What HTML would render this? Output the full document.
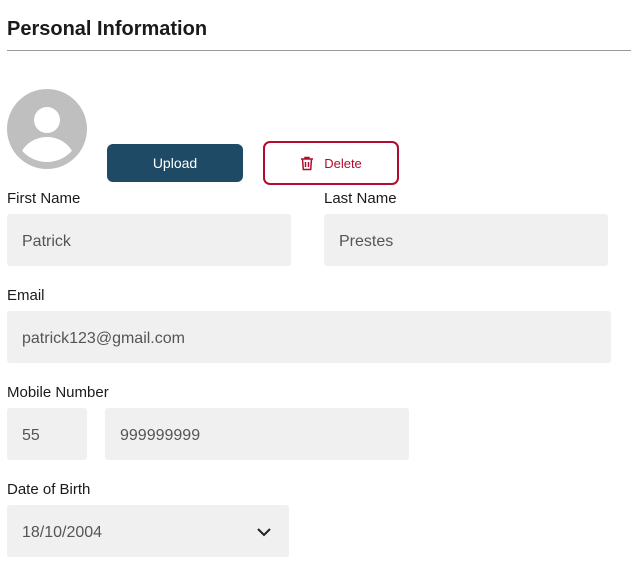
<!DOCTYPE html>
<html><head><style>
body{margin:0;width:631px;height:564px;background:#fff;font-family:"Liberation Sans",sans-serif;position:relative;overflow:hidden}
.a{position:absolute}
.lbl{position:absolute;font-size:15px;color:#1a1a1a}
.inp{position:absolute;background:#f0f0f0;border-radius:3px;font-size:16px;color:#555;box-sizing:border-box;padding-left:15px;padding-top:3px;display:flex;align-items:center;height:52px}
</style></head><body>
<div class="a" style="left:7px;top:18px;font-size:20px;font-weight:bold;color:#1a1a1a">Personal Information</div>
<div class="a" style="left:7px;top:50px;width:624px;height:1px;background:#999"></div>
<svg class="a" style="left:7px;top:89px" width="80" height="80" viewBox="0 0 80 80">
<defs><clipPath id="c"><circle cx="40" cy="40" r="33"/></clipPath></defs>
<circle cx="40" cy="40" r="40" fill="#bfbfbf"/>
<circle cx="40" cy="31" r="13" fill="#fff"/>
<ellipse cx="40" cy="76" rx="29" ry="28" fill="#fff" clip-path="url(#c)"/>
</svg>
<div class="a" style="left:107px;top:144px;width:136px;height:38px;background:#1e4a66;border-radius:6px;color:#fff;font-size:14px;display:flex;align-items:center;justify-content:center">Upload</div>
<div class="a" style="left:263px;top:141px;width:136px;height:44px;border:2px solid #b00c2e;border-radius:7px;box-sizing:border-box;color:#b00c2e;font-size:13px;display:flex;align-items:center;justify-content:center">
<svg width="14" height="15" viewBox="0 0 14 15" style="margin-right:10px"><path d="M1 3h12M5 3V1.5h4V3M2.5 3l.8 10.5h7.4L11.5 3M5.5 6v5M8.5 6v5" stroke="#b00c2e" stroke-width="1.5" fill="none"/></svg>Delete</div>
<div class="lbl" style="left:7px;top:190px">First Name</div>
<div class="lbl" style="left:324px;top:190px">Last Name</div>
<div class="inp" style="left:7px;top:214px;width:284px">Patrick</div>
<div class="inp" style="left:324px;top:214px;width:284px">Prestes</div>
<div class="lbl" style="left:7px;top:287px">Email</div>
<div class="inp" style="left:7px;top:311px;width:604px">patrick123@gmail.com</div>
<div class="lbl" style="left:7px;top:384px">Mobile Number</div>
<div class="inp" style="left:7px;top:408px;width:80px">55</div>
<div class="inp" style="left:105px;top:408px;width:304px">999999999</div>
<div class="lbl" style="left:7px;top:481px">Date of Birth</div>
<div class="inp" style="left:7px;top:505px;width:282px">18/10/2004</div>
<svg class="a" style="left:256px;top:527px" width="16" height="10" viewBox="0 0 16 10"><path d="M2 2l6 6 6-6" stroke="#222" stroke-width="2" fill="none"/></svg>
</body></html>
